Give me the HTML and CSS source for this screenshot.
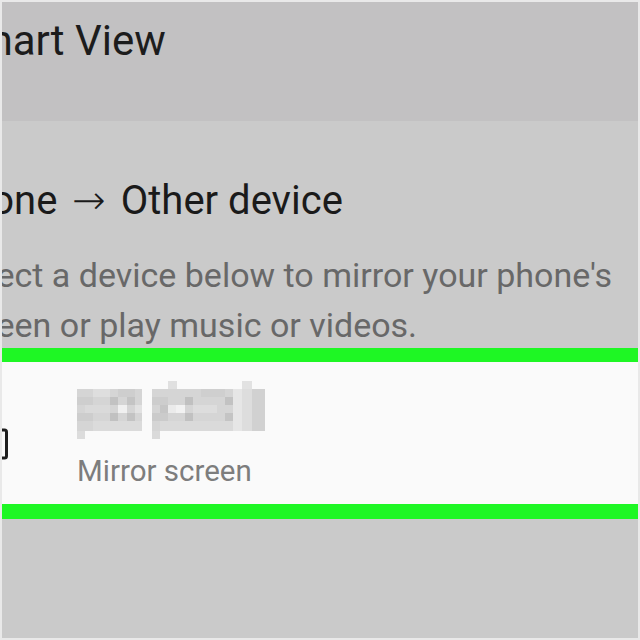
FILE: index.html
```html
<!DOCTYPE html>
<html lang="en">
<head>
<meta charset="utf-8">
<title>Smart View</title>
<link rel="stylesheet" href="styles.css">
</head>
<body>
<div class="frame">
  <header class="topbar">
    <h1 class="title">Smart View</h1>
  </header>
  <main class="content">
    <h2 class="heading">Phone <span class="arrow">→</span> Other device</h2>
    <p class="desc">Select a device below to mirror your phone's<br>screen or play music or videos.</p>
    <div class="device-row">
      <svg class="device-icon" width="8" height="32" viewBox="0 0 8 32">
        <path d="M-6 2 H2.5 Q4.5 2 4.5 4 V28 Q4.5 30 2.5 30 H-6" fill="none" stroke="#1e1e1e" stroke-width="3"/>
      </svg>
      <div class="device-text">
        <svg class="device-name" width="190" height="58" viewBox="0 0 190 58">
          <rect x="0" y="8" width="65" height="42" fill="#d5d5d5"/>
          <rect x="0" y="50" width="8" height="8" fill="#dcdcdc"/>
          <rect x="0" y="16" width="16" height="8" fill="#cecece"/>
          <rect x="8" y="24" width="25" height="8" fill="#dadada"/>
          <rect x="0" y="32" width="16" height="8" fill="#cdcdcd"/>
          <rect x="16" y="8" width="17" height="8" fill="#dedede"/>
          <rect x="33" y="16" width="8" height="8" fill="#c2c2c2"/>
          <rect x="50" y="16" width="8" height="8" fill="#c4c4c4"/>
          <rect x="41" y="24" width="9" height="8" fill="#f0f0f0"/>
          <rect x="58" y="24" width="7" height="8" fill="#e2e2e2"/>
          <rect x="33" y="32" width="8" height="8" fill="#c1c1c1"/>
          <rect x="50" y="32" width="8" height="8" fill="#c3c3c3"/>
          <rect x="16" y="40" width="49" height="10" fill="#dbdbdb"/>
          <rect x="41" y="8" width="17" height="8" fill="#cecece"/>

          <rect x="75" y="8" width="113" height="42" fill="#d5d5d5"/>
          <rect x="91" y="0" width="9" height="8" fill="#e0e0e0"/>
          <rect x="165" y="0" width="10" height="8" fill="#e2e2e2"/>
          <rect x="75" y="50" width="8" height="8" fill="#dadada"/>
          <rect x="75" y="16" width="16" height="8" fill="#cdcdcd"/>
          <rect x="83" y="24" width="8" height="8" fill="#c6c6c6"/>
          <rect x="91" y="24" width="8" height="8" fill="#ebebeb"/>
          <rect x="75" y="32" width="16" height="8" fill="#cbcbcb"/>
          <rect x="108" y="16" width="8" height="8" fill="#c0c0c0"/>
          <rect x="99" y="24" width="9" height="8" fill="#f2f2f2"/>
          <rect x="108" y="32" width="8" height="8" fill="#c1c1c1"/>
          <rect x="116" y="24" width="24" height="8" fill="#dddddd"/>
          <rect x="124" y="8" width="24" height="8" fill="#cfcfcf"/>
          <rect x="148" y="16" width="8" height="8" fill="#c2c2c2"/>
          <rect x="148" y="32" width="8" height="8" fill="#c4c4c4"/>
          <rect x="156" y="8" width="9" height="42" fill="#e6e6e6"/>
          <rect x="165" y="8" width="10" height="42" fill="#dddddd"/>
          <rect x="175" y="8" width="13" height="42" fill="#d1d1d1"/>
          <rect x="83" y="40" width="73" height="10" fill="#dadada"/>
        </svg>
        <div class="device-sub">Mirror screen</div>
      </div>
    </div>
  </main>
</div>
</body>
</html>
```

FILE: styles.css
```css
html, body {
  margin: 0;
  padding: 0;
  background: #ebebeb;
}

.frame {
  box-sizing: border-box;
  width: 640px;
  height: 640px;
  border: 2px solid #e9e9e9;
  background: #cacaca;
  overflow: hidden;
  font-family: Roboto, "Liberation Sans", sans-serif;
  display: flex;
  flex-direction: column;
}

.topbar {
  height: 119px;
  flex: none;
  background: #c2c1c2;
  padding-top: 15px;
  box-sizing: border-box;
}

.title {
  margin: 0 0 0 -51px;
  font-size: 42px;
  line-height: 48px;
  font-weight: 400;
  color: #1c1c1c;
  white-space: nowrap;
}

.content {
  flex: 1;
  background: #cacaca;
  padding-top: 55px;
}

.heading {
  margin: 0 0 0 -58px;
  font-size: 40px;
  line-height: 48px;
  font-weight: 400;
  color: #1a1a1a;
  white-space: nowrap;
}

.arrow {
  font-family: "DejaVu Sans", sans-serif;
  font-weight: 200;
  font-size: 40px;
  margin: 0 5px;
}

.desc {
  margin: 25px 0 -2px -52px;
  font-size: 34px;
  line-height: 50px;
  color: #686868;
  white-space: nowrap;
}

.device-row {
  display: flex;
  align-items: flex-start;
  gap: 67px;
  height: 142px;
  background: #fafafa;
  border-top: 14px solid #1ef724;
  border-bottom: 15px solid #1ef724;
}

.device-icon {
  display: block;
  flex: none;
  margin-top: 66px;
  overflow: visible;
}

.device-text {
  display: flex;
  flex-direction: column;
  padding-top: 19px;
}

.device-name {
  display: block;
}

.device-sub {
  margin-top: 14px;
  font-size: 29.5px;
  line-height: 36px;
  color: #7d7d7d;
  white-space: nowrap;
}
```
